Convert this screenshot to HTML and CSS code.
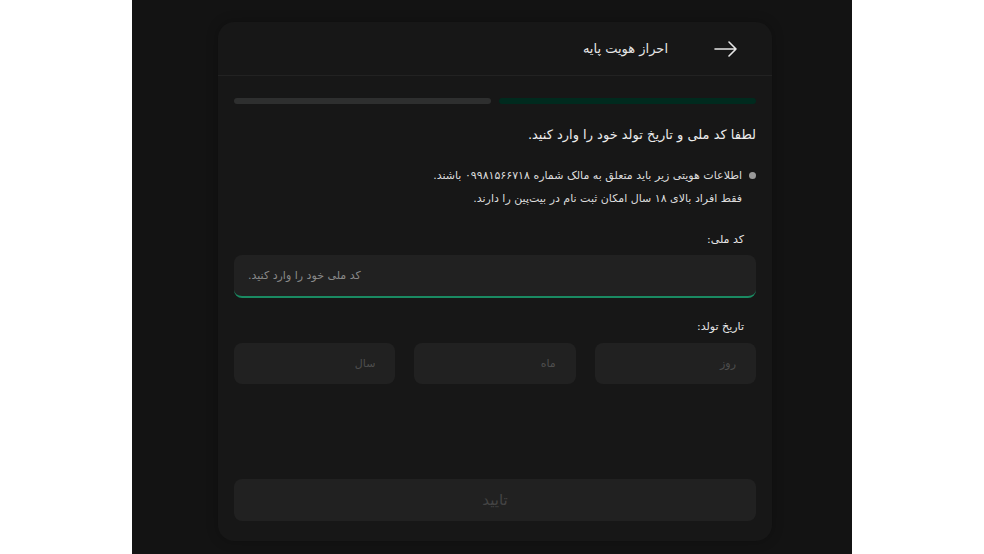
FILE: index.html
```html
<!DOCTYPE html>
<html lang="fa" dir="rtl">
<head>
    <meta charset="UTF-8">
    <meta name="viewport" content="width=device-width, initial-scale=1.0">
    <title>احراز هویت پایه</title>
    <link rel="stylesheet" href="styles.css">
</head>
<body>
    <div class="page">
        <div class="card">
            <div class="header">
                <span class="back">
                    <svg width="24" height="16" viewBox="0 0 24 16" fill="none" stroke="#e6e6e6" stroke-width="1.6" stroke-linecap="round" stroke-linejoin="round">
                        <path d="M1 8h21M15 1l7 7-7 7"/>
                    </svg>
                </span>
                <h1 class="title">احراز هویت پایه</h1>
            </div>
            <div class="body">
                <div class="steps">
                    <div class="step active"></div>
                    <div class="step"></div>
                </div>
                <p class="lead">لطفا کد ملی و تاریخ تولد خود را وارد کنید.</p>
                <ul class="notes">
                    <li>اطلاعات هویتی زیر باید متعلق به مالک شماره ۰۹۹۸۱۵۶۶۷۱۸ باشند.</li>
                    <li class="plain">فقط افراد بالای ۱۸ سال امکان ثبت نام در بیت‌پین را دارند.</li>
                </ul>
                <label class="label">کد ملی:</label>
                <input class="field national" type="text" placeholder="کد ملی خود را وارد کنید.">
                <label class="label birth">تاریخ تولد:</label>
                <div class="date-row">
                    <input class="field small" type="text" placeholder="روز">
                    <input class="field small" type="text" placeholder="ماه">
                    <input class="field small" type="text" placeholder="سال">
                </div>
                <button class="submit" disabled>تایید</button>
            </div>
        </div>
    </div>
</body>
</html>
```

FILE: styles.css
```css
body {
    margin: 0;
    background-color: #fff;
    font-family: "DejaVu Sans", "Noto Sans", sans-serif;
}
.page {
    width: 720px;
    height: 554px;
    margin: 0 auto;
    background-color: #131313;
    padding: 22px 80px 0 86px;
    box-sizing: border-box;
}
.card {
    background: #171717;
    border-radius: 16px;
    height: 519px;
    box-shadow: 0 0 12px rgba(0, 0, 0, 0.25);
}
.header {
    display: flex;
    align-items: center;
    gap: 46px;
    height: 53px;
    padding: 0 34px;
    border-bottom: 1px solid #222;
}
.back {
    display: flex;
}
.title {
    margin: 0;
    font-size: 13px;
    font-weight: normal;
    color: #e6e6e6;
}
.body {
    padding: 22px 16px 0;
}
.steps {
    display: flex;
    gap: 8px;
}
.step {
    flex: 1;
    height: 6px;
    border-radius: 3px;
    background-color: #2e2f2f;
}
.step.active {
    background-color: #002a1e;
}
.lead {
    margin: 23px 0 0;
    font-size: 13px;
    color: #ececec;
}
.notes {
    margin: 22px 0 0;
    padding: 0 14px 0 0;
    list-style: none;
}
.notes li {
    position: relative;
    font-size: 11px;
    color: #dcdcdc;
    line-height: 23px;
}
.notes li::before {
    content: "";
    position: absolute;
    right: -14px;
    top: 8px;
    width: 7px;
    height: 7px;
    border-radius: 50%;
    background-color: #9a9a9a;
}
.notes li.plain::before {
    display: none;
}
.label {
    display: block;
    margin: 23px 12px 9px 0;
    font-size: 11px;
    color: #e6e6e6;
}
.label.birth {
    margin-top: 22px;
    margin-bottom: 10px;
}
.field {
    display: block;
    width: 100%;
    height: 43px;
    box-sizing: border-box;
    padding: 0 14px;
    border: none;
    border-radius: 8px;
    background-color: #212121;
    font-family: "DejaVu Sans", "Noto Sans", sans-serif;
    font-size: 11px;
    color: #ddd;
    outline: none;
}
.field.national {
    border-bottom: 2px solid #1a8a62;
    text-align: left;
}
.field::placeholder {
    color: #8a8a8a;
}
.date-row {
    display: flex;
    gap: 19px;
}
.field.small {
    flex: 1;
    height: 41px;
    padding: 0 20px;
}
.field.small::placeholder {
    color: #4e4e4e;
}
.submit {
    display: block;
    width: 100%;
    height: 42px;
    margin-top: 95px;
    border: none;
    border-radius: 8px;
    background-color: #212121;
    font-family: "DejaVu Sans", "Noto Sans", sans-serif;
    font-size: 15px;
    color: #444;
}
```
